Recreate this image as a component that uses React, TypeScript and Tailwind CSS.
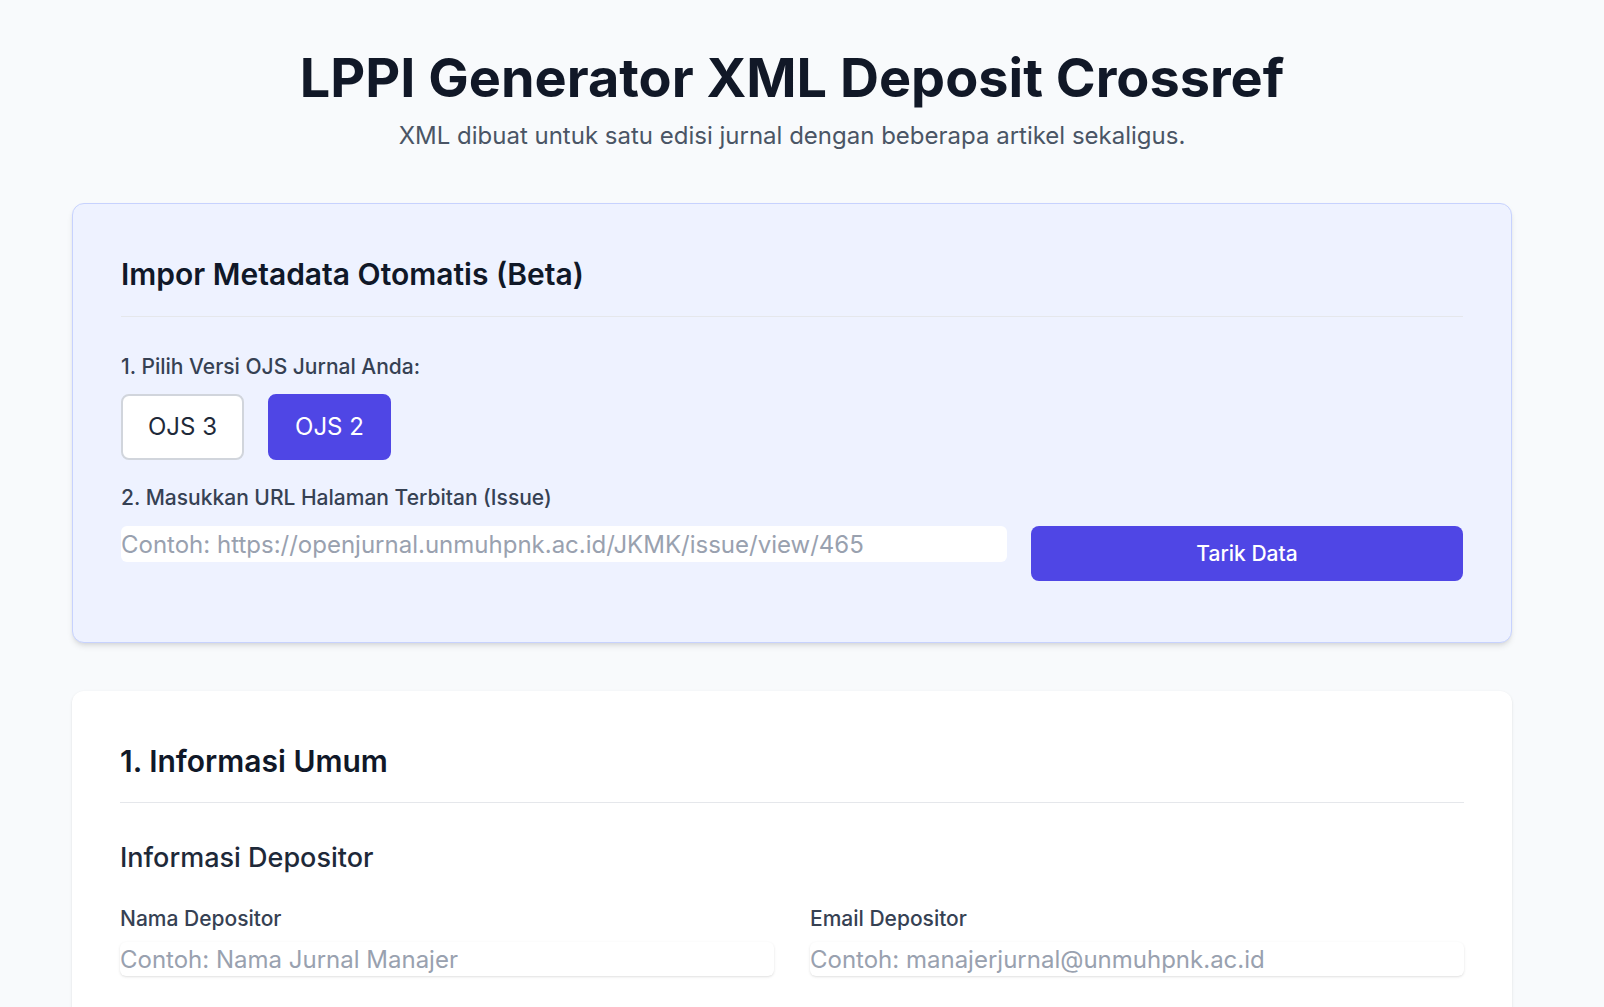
import React, { useState } from 'react';

const Field: React.FC<{ label: string; placeholder: string; type?: string }> = ({
  label,
  placeholder,
  type = 'text',
}) => (
  <div>
    <label className="block text-[21px] leading-[28px] font-medium text-gray-700">{label}</label>
    <input
      type={type}
      placeholder={placeholder}
      className="mt-[9px] h-[34px] w-full rounded-md bg-white text-2xl text-gray-800 shadow-sm outline-none placeholder:text-gray-400"
    />
  </div>
);

const App: React.FC = () => {
  const [ojs, setOjs] = useState<'3' | '2'>('2');

  const ojsBtn = (v: '3' | '2') =>
    `rounded-lg border-2 px-[25px] py-[15px] text-2xl ${
      ojs === v ? 'border-[#4f46e5] bg-[#4f46e5] text-white' : 'border-gray-300 bg-white text-gray-800'
    }`;

  return (
    <div className="min-h-screen bg-[#f8fafc] font-['Inter',sans-serif] text-gray-900">
      <div className="pl-[72px] pr-[92px] pt-[46px] pb-16">
        <header className="text-center">
          <h1 className="text-[54px] leading-[64px] font-bold text-[#111827]">
            LPPI Generator XML Deposit Crossref
          </h1>
          <p className="mt-[10px] text-2xl text-gray-600">
            XML dibuat untuk satu edisi jurnal dengan beberapa artikel sekaligus.
          </p>
        </header>

        {/* import card */}
        <section className="mt-[51px] rounded-xl border border-[#c7d2fe] bg-[#eef2ff] px-12 pt-[52px] pb-[61px] shadow-md">
          <h2 className="border-b border-gray-200 pb-[24px] text-3xl font-semibold text-gray-900">
            Impor Metadata Otomatis (Beta)
          </h2>

          <label className="mt-[36px] block text-[21px] leading-[28px] font-medium text-gray-700">
            1. Pilih Versi OJS Jurnal Anda:
          </label>
          <div className="mt-[13px] flex gap-6">
            <button onClick={() => setOjs('3')} className={ojsBtn('3')}>
              OJS 3
            </button>
            <button onClick={() => setOjs('2')} className={ojsBtn('2')}>
              OJS 2
            </button>
          </div>

          <label className="mt-[24px] block text-[21px] leading-[28px] font-medium text-gray-700">
            2. Masukkan URL Halaman Terbitan (Issue)
          </label>
          <div className="mt-[14px] flex items-start gap-6">
            <input
              type="text"
              placeholder="Contoh: https://openjurnal.unmuhpnk.ac.id/JKMK/issue/view/465"
              className="h-9 flex-1 rounded-md bg-white text-2xl text-gray-800 outline-none placeholder:text-gray-400"
            />
            <button className="h-[55px] w-[432px] rounded-lg bg-[#4f46e5] text-[21px] font-medium text-white">
              Tarik Data
            </button>
          </div>
        </section>

        {/* general info */}
        <section className="mt-[48px] rounded-xl bg-white px-12 pt-[52px] pb-12 shadow-sm">
          <h2 className="border-b border-gray-200 pb-[23px] text-3xl font-semibold text-gray-900">
            1. Informasi Umum
          </h2>

          <h3 className="mt-[39px] text-[27px] leading-[32px] font-medium text-gray-800">
            Informasi Depositor
          </h3>
          <div className="mt-[31px] grid grid-cols-2 gap-x-9 gap-y-10">
            <Field label="Nama Depositor" placeholder="Contoh: Nama Jurnal Manajer" />
            <Field label="Email Depositor" type="email" placeholder="Contoh: manajerjurnal@unmuhpnk.ac.id" />
          </div>
        </section>
      </div>
    </div>
  );
};

export default App;
